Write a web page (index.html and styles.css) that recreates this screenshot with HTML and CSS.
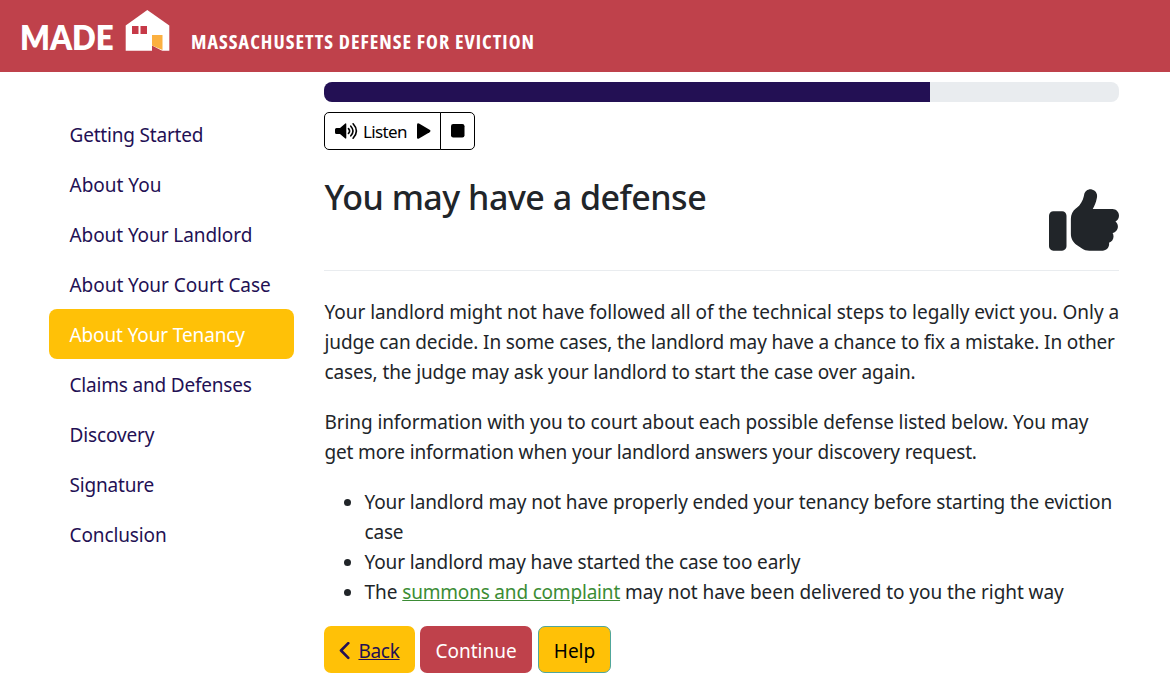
FILE: index.html
```html
<!DOCTYPE html>
<html lang="en">
<head>
<meta charset="utf-8">
<title>MADE: Massachusetts Defense for Eviction</title>
<link rel="stylesheet" href="styles.css">
</head>
<body>
<header class="navbar">
  <span class="brand">MADE</span>
  <svg class="house" width="46" height="42" viewBox="0 0 46 42"><path fill="#fff" d="M.7 15.5 22.3 0 44.3 15.5V40.7H.7z"/><path fill="#be1e2d" opacity=".88" d="M7 16h6.5v8H7zM15.5 16H22v8h-6.5z"/><path fill="#bf414b" d="M27 35.500 37.500 41H27z"/><path fill="#fbb040" d="M27 25h10.500v15L27 35.500z"/></svg>
  <span class="tagline">MASSACHUSETTS DEFENSE FOR EVICTION</span>
</header>
<div class="layout">
  <nav class="steps">
    <a class="step s1">Getting Started</a>
    <a class="step s2">About You</a>
    <a class="step s3">About Your Landlord</a>
    <a class="step s4">About Your Court Case</a>
    <a class="step s5 active">About Your Tenancy</a>
    <a class="step s6">Claims and Defenses</a>
    <a class="step s7">Discovery</a>
    <a class="step s8">Signature</a>
    <a class="step s9">Conclusion</a>
  </nav>
  <main class="question">
    <div class="progress"><div class="progress-bar"></div></div>
    <div class="audio">
      <button class="listen">
        <svg class="speaker" width="23" height="18" viewBox="0 0 23 18"><path d="M1.5 6H5l5-4.3q1.3-.9 1.3.6v13.4q0 1.5-1.3.6L5 12H1.5Q0 12 0 10.5v-3Q0 6 1.5 6z"/><path fill="none" stroke="#000" stroke-width="1.6" stroke-linecap="round" d="M13.5 6.6q2.2 2.4 0 4.8M15.8 4.2q4.4 4.8 0 9.6M18.1 1.8q6.6 7.2 0 14.4"/></svg>
        <span class="listen-label">Listen</span>
        <svg class="play" width="14" height="16" viewBox="0 0 14 16"><path d="M0 1.7Q0-.6 2 .5l10.6 6.3q1.800 1.200 0 2.400L2 15.500q-2 1.100-2-1.200z"/></svg>
      </button>
      <button class="stop"><svg width="14" height="14" viewBox="0 0 14 14"><rect width="13.5" height="13.5" rx="2.2"/></svg></button>
    </div>
    <div class="heading">
      <h1>You may have a defense</h1>
      <svg class="thumb" width="70" height="70" viewBox="0 0 512 512"><path fill="#212529" d="M313.4 32.9c26 5.2 42.9 30.5 37.7 56.5l-2.3 11.4c-5.3 26.7-15.1 52.1-28.8 75.2H464c26.5 0 48 21.5 48 48c0 18.5-10.5 34.6-25.9 42.6C497 275.4 504 288.9 504 304c0 23.4-16.8 42.9-38.9 47.1c4.4 7.3 6.9 15.8 6.9 24.9c0 21.3-13.9 39.4-33.1 45.6c.7 3.3 1.1 6.8 1.1 10.4c0 26.5-21.5 48-48 48H294.5c-19 0-37.5-5.6-53.3-16.1l-38.5-25.7C176 420.4 160 390.4 160 358.3V320 272 247.1c0-29.2 13.3-56.7 36-75l7.4-5.9c26.5-21.2 44.6-51 51.2-84.2l2.3-11.4c5.2-26 30.5-42.9 56.5-37.7zM32 192H96c17.7 0 32 14.3 32 32V448c0 17.7-14.3 32-32 32H32c-17.7 0-32-14.3-32-32V224c0-17.7 14.3-32 32-32z"/></svg>
    </div>
    <p><span class="line l1">Your landlord might not have followed all of the technical steps to legally evict you. Only a</span> <span class="line l2">judge can decide. In some cases, the landlord may have a chance to fix a mistake. In other</span> <span class="line l3">cases, the judge may ask your landlord to start the case over again.</span></p>
    <p><span class="line l4">Bring information with you to court about each possible defense listed below. You may</span> <span class="line l5">get more information when your landlord answers your discovery request.</span></p>
    <ul>
      <li><span class="line l6">Your landlord may not have properly ended your tenancy before starting the eviction</span> <span class="line l7">case</span></li>
      <li><span class="line l8">Your landlord may have started the case too early</span></li>
      <li><span class="line l9">The <a class="term">summons and complaint</a> may not have been delivered to you the right way</span></li>
    </ul>
    <div class="actions">
      <button class="btn back"><svg width="11" height="18" viewBox="0 0 11 18"><path fill="none" stroke="#231054" stroke-width="2.6" stroke-linecap="round" stroke-linejoin="round" d="M9.3 1.200 2 8.500l7.300 7.300"/></svg><span class="back-label">Back</span></button>
      <button class="btn continue">Continue</button>
      <button class="btn help">Help</button>
    </div>
  </main>
</div>
</body>
</html>
```
FILE: styles.css
```css
* { box-sizing: border-box; }
body { margin: 0; background: #fff; color: #212529; font: 19px/30px "Noto Sans", "Open Sans", sans-serif; overflow: hidden; }
button { font: inherit; margin: 0; }
.navbar { height: 72px; background: #bf414b; color: #fff; display: flex; align-items: flex-start; padding-left: 20px; }
.brand { font: 800 33px/40px Lato, sans-serif; width: 105px; padding-top: 17px; white-space: nowrap; transform: scaleX(.945); transform-origin: 0 0; }
.house { margin-top: 10px; width: 46px; flex: none; }
.tagline { font: 700 20px/24px "Open Sans", sans-serif; font-stretch: 75%; letter-spacing: 1.03px; padding: 30px 0 0 20px; white-space: nowrap; }
.layout { display: grid; grid-template-columns: 245px 795px; column-gap: 30px; padding-left: 49px; }
.steps { padding-top: 37px; display: flex; flex-direction: column; }
.step { height: 50px; padding: 11px 20.5px; color: #231054; border-radius: 8px; white-space: nowrap; }
.step.active { background: #ffc107; color: #fff; }
.s1 { letter-spacing: -.19px; }
.s3 { letter-spacing: -.08px; }
.s4 { letter-spacing: -.04px; }
.s5 { letter-spacing: -.12px; }
.s6 { letter-spacing: -.19px; }
.s7 { letter-spacing: -.13px; }
.s8 { letter-spacing: -.18px; }
.s9 { letter-spacing: -.12px; }
.question { padding-top: 10px; }
.progress { height: 20px; background: #e9ecef; border-radius: 8px; overflow: hidden; }
.progress-bar { width: 606px; height: 20px; background: #231054; }
.audio { display: flex; margin-top: 10px; height: 38px; }
.audio button { background: #fff; border: 1px solid #000; display: flex; align-items: center; color: #000; }
.listen { width: 117px; border-radius: 5px 0 0 5px; padding: 0 0 0 10px; }
.listen-label { font-size: 17px; letter-spacing: -.65px; width: 59px; padding: 1px 0 0 5px; text-align: left; }
.stop { width: 35px; margin-left: -1px; border-radius: 0 5px 5px 0; padding: 0 0 0 10px; }
.heading { display: flex; justify-content: space-between; height: 121px; border-bottom: 1px solid #e9ecef; }
h1 { margin: 25px 0 0 .5px; font: 500 34px/44px "Noto Sans", sans-serif; letter-spacing: -.49px; white-space: nowrap; }
.thumb { margin-top: 35px; flex: none; }
p { margin: 0 0 20px; }
.heading + p { margin-top: 26px; }
.line { display: block; width: max-content; white-space: nowrap; margin-left: .5px; }
.l1 { letter-spacing: -.038px; }
.l2 { letter-spacing: -.133px; }
.l3 { letter-spacing: -.118px; }
.l4 { letter-spacing: -.094px; }
.l5 { letter-spacing: -.16px; }
.l6 { letter-spacing: -.096px; }
.l7 { letter-spacing: -.2px; }
.l8 { letter-spacing: -.13px; }
.l9 { letter-spacing: -.06px; }
ul { margin: 0; padding-left: 40px; }
.term { color: #3b8c35; text-decoration: underline; letter-spacing: -.19px; }
.actions { display: flex; margin-top: 19px; height: 47px; }
.btn { height: 47px; border: 0; border-radius: 7px; padding: 2px 0 0; display: flex; align-items: center; justify-content: center; white-space: nowrap; }
.back { width: 91px; background: #ffc107; color: #231054; gap: 8px; }
.back-label { text-decoration: underline; letter-spacing: -.3px; }
.continue { width: 112px; margin-left: 5px; background: #bf414b; color: #fff; }
.help { width: 73px; margin-left: 6px; background: #ffc107; border: 1px solid #50a69b; color: #000; }
```
